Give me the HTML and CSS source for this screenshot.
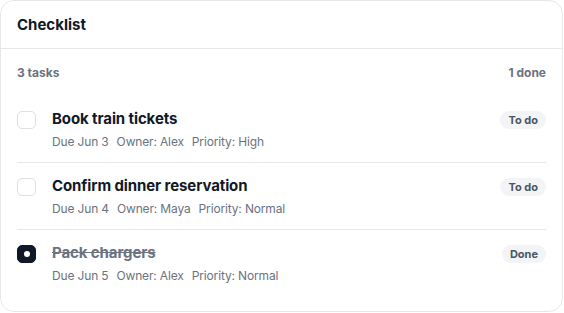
FILE: index.html
```html
<!DOCTYPE html>
<html>
<head>
<meta charset="utf-8">
<link rel="stylesheet" href="styles.css">
</head>
<body>
<div class="card">
  <div class="card-header">Checklist</div>
  <div class="summary">
    <span>3 tasks</span>
    <span>1 done</span>
  </div>
  <ul class="tasks">
    <li class="task">
      <span class="check"></span>
      <div class="task-body">
        <div class="task-title">Book train tickets</div>
        <div class="task-meta"><span>Due Jun 3</span><span>Owner: Alex</span><span>Priority: High</span></div>
      </div>
      <span class="badge">To do</span>
    </li>
    <li class="task">
      <span class="check"></span>
      <div class="task-body">
        <div class="task-title">Confirm dinner reservation</div>
        <div class="task-meta"><span>Due Jun 4</span><span>Owner: Maya</span><span>Priority: Normal</span></div>
      </div>
      <span class="badge">To do</span>
    </li>
    <li class="task done">
      <span class="check checked"></span>
      <div class="task-body">
        <div class="task-title">Pack chargers</div>
        <div class="task-meta"><span>Due Jun 5</span><span>Owner: Alex</span><span>Priority: Normal</span></div>
      </div>
      <span class="badge">Done</span>
    </li>
  </ul>
</div>
</body>
</html>
```
FILE: styles.css
```css
* { box-sizing: border-box; }
html, body { margin: 0; padding: 0; background: #ffffff; }
body {
  font-family: Inter, "Noto Sans", sans-serif;
  color: #111827;
}
.card {
  width: 563px;
  height: 312px;
  border: 1px solid #e5e7eb;
  border-radius: 14px;
  background: #fff;
  overflow: hidden;
}
.card-header {
  height: 48px;
  display: flex;
  align-items: center;
  padding: 0 16px;
  font-size: 15px;
  font-weight: 700;
  border-bottom: 1px solid #e5e7eb;
}
.summary {
  display: flex;
  justify-content: space-between;
  align-items: flex-start;
  padding: 16px 16px 0;
  height: 47px;
  font-size: 12px;
  font-weight: 700;
  color: #6b7280;
  line-height: 16px;
}
.tasks {
  list-style: none;
  margin: 0;
  padding: 0 16px;
}
.task {
  display: flex;
  align-items: flex-start;
  gap: 16px;
  padding: 13px 0 12px;
  border-bottom: 1px solid #e5e7eb;
}
.task:last-child { border-bottom: none; }
.check {
  flex: none;
  width: 19px;
  height: 18px;
  margin-top: 2px;
  border: 1px solid #dcdfe4;
  border-radius: 5px;
  background: #fff;
  display: flex;
  align-items: center;
  justify-content: center;
}
.check.checked {
  background: #111827;
  border-color: #111827;
}
.check.checked::after {
  content: "";
  width: 6px;
  height: 6px;
  border-radius: 50%;
  background: #fff;
}
.task-body { flex: 1; min-width: 0; }
.task-title {
  font-size: 15px;
  line-height: 20px;
  font-weight: 700;
  color: #111827;
  letter-spacing: -0.1px;
}
.task.done .task-title {
  color: #6b7280;
  text-decoration: line-through;
}
.task-meta {
  margin-top: 5px;
  display: flex;
  gap: 8px;
  font-size: 12px;
  line-height: 16px;
  color: #6b7280;
  letter-spacing: -0.15px;
}
.badge {
  flex: none;
  margin-top: 2px;
  padding: 1px 8px;
  height: 18px;
  line-height: 16px;
  border-radius: 9px;
  background: #f3f4f6;
  color: #4b5563;
  font-size: 11px;
  font-weight: 700;
}
```
